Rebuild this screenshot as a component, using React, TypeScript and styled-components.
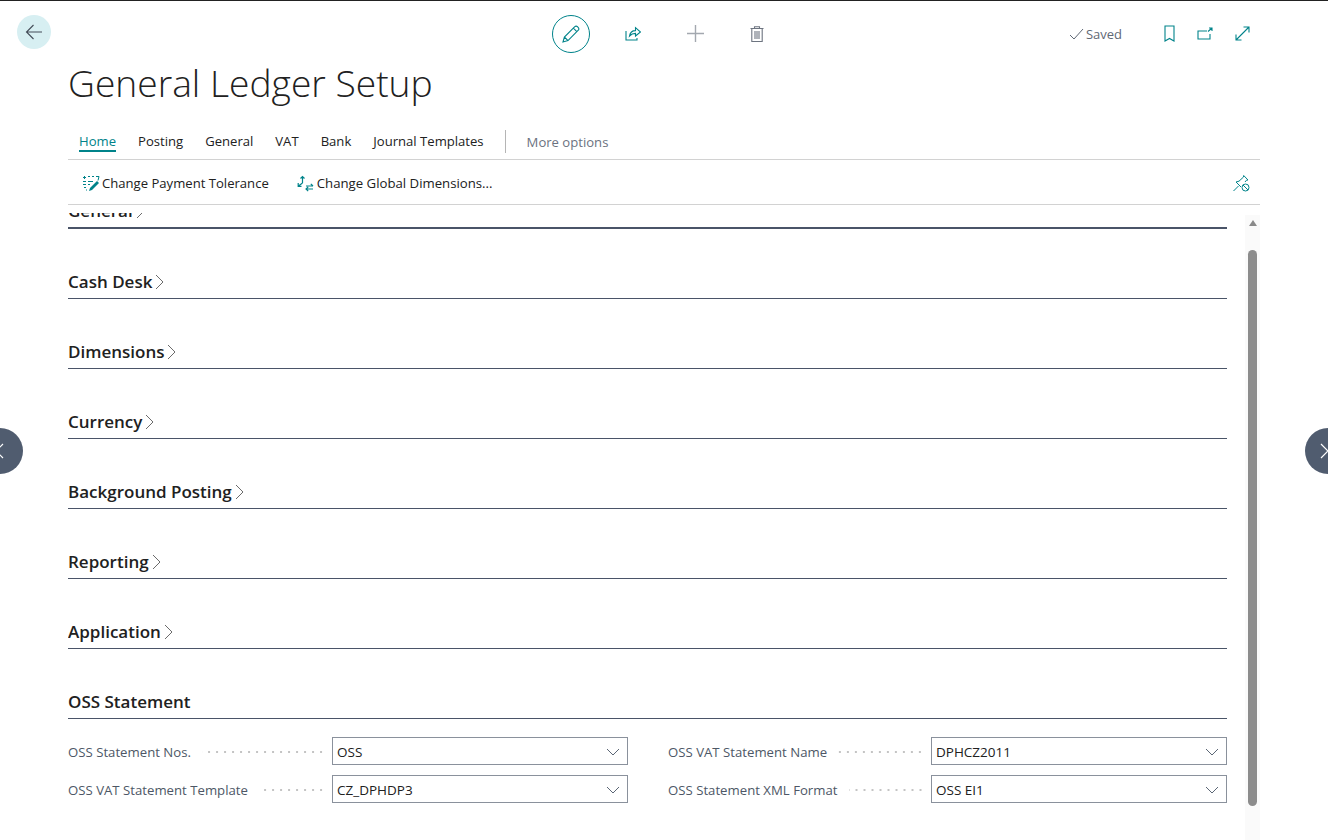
import { createGlobalStyle } from "styled-components";
import styled from "styled-components";

const GlobalStyle = createGlobalStyle`
  html, body {
    margin: 0;
    padding: 0;
    background: #fff;
    font-family: "Open Sans", "Liberation Sans", sans-serif;
    overflow: hidden;
  }
`;

const TEAL = "#00838a";

const collapsed = ["Cash Desk", "Dimensions", "Currency", "Background Posting", "Reporting", "Application"];
const tabs = ["Home", "Posting", "General", "VAT", "Bank", "Journal Templates"];

function Chevron() {
  return (
    <svg width="9" height="16" viewBox="0 0 9 16" fill="none" stroke="#6b6b6b" strokeWidth="1">
      <path d="M1 1l7 7-7 7" />
    </svg>
  );
}

function Caret() {
  return (
    <svg width="14" height="8" viewBox="0 0 14 8" fill="none" stroke="#5b6675" strokeWidth="1">
      <path d="M1 1l6 6 6-6" />
    </svg>
  );
}

function Field({ label, value }: { label: string; value: string }) {
  return (
    <FieldRow>
      <FieldLabel>{label}</FieldLabel>
      <Dots />
      <Select>
        <span>{value}</span>
        <Caret />
      </Select>
    </FieldRow>
  );
}

export default function App() {
  return (
    <Page>
      <GlobalStyle />
      <TopBar>
        <BackButton>
          <svg width="18" height="16" viewBox="0 0 18 16" fill="none" stroke="#444c58" strokeWidth="1.1">
            <path d="M17 8H1.5M8.5 1L1.5 8l7 7" />
          </svg>
        </BackButton>
        <CenterActions>
          <EditButton>
            <svg width="18" height="18" viewBox="0 0 18 18" fill="none" stroke={TEAL} strokeWidth="1.1">
              <path d="M1 17l1.4-5L12.8 1.7a1.8 1.8 0 0 1 2.6 0l.9.9a1.8 1.8 0 0 1 0 2.6L6 15.6 1 17zM2.4 12L6 15.6M11.4 3.2l3.4 3.4" />
            </svg>
          </EditButton>
          <IconSlot>
            <svg width="16" height="15" viewBox="0 0 16 15" fill="none" stroke={TEAL} strokeWidth="1.1">
              <path d="M1 5v9h11v-2M4.500 10c.6-3.500 3-5.400 6-5.400V1.600L15.500 6l-5 4V7.400C8.100 7.400 6.100 8.300 4.500 10z" />
            </svg>
          </IconSlot>
          <IconSlot>
            <svg width="17" height="17" viewBox="0 0 17 17" fill="none" stroke="#a3a8af" strokeWidth="1.4">
              <path d="M8.500 0v17M0 8.500h17" />
            </svg>
          </IconSlot>
          <IconSlot>
            <svg width="14" height="16" viewBox="0 0 14 16" fill="none" stroke="#6d7480" strokeWidth="1.1">
              <path d="M.500 2.500h13M4.500 2.500V.800h5v1.700M1.800 2.500v13h10.400v-13M5 5v8M7 5v8M9 5v8" />
            </svg>
          </IconSlot>
        </CenterActions>
        <RightActions>
          <SavedState>
            <svg width="15" height="12" viewBox="0 0 15 12" fill="none" stroke="#5f6875" strokeWidth="1">
              <path d="M1 7l4 4 9-10" />
            </svg>
            Saved
          </SavedState>
          <RightIcons>
            <svg width="11" height="17" viewBox="0 0 11 17" fill="none" stroke={TEAL} strokeWidth="1.1">
              <path d="M1 1h9v15l-4.500-2.500L1 16z" />
            </svg>
            <svg width="16" height="13" viewBox="0 0 16 13" fill="none" stroke={TEAL} strokeWidth="1.1">
              <path d="M10 4H1v8h12V7M11 4.500L15 1M12 1h3v3" />
            </svg>
            <svg width="15" height="15" viewBox="0 0 15 15" fill="none" stroke={TEAL} strokeWidth="1.1">
              <path d="M1 14L14 1M8.500 1H14v5.500M1 8.500V14h5.500" />
            </svg>
          </RightIcons>
        </RightActions>
      </TopBar>

      <Title>General Ledger Setup</Title>

      <TabBar>
        {tabs.map((t, i) => (
          <Tab key={t} $active={i === 0}>
            {t}
          </Tab>
        ))}
        <TabDivider />
        <MoreTab>More options</MoreTab>
      </TabBar>

      <ToolBar>
        <ToolButton>
          <svg width="18" height="17" viewBox="0 0 18 17" fill="none" stroke={TEAL} strokeWidth="1">
            <path d="M1 2.500h3M2.500 1v3M6 1.500h2M10 1.500h2M14 1.500h3l-1 4M1 6.500h3M6 6.500h5M1 9.500h3M6 9.500h2M2 12.500h2M4 15h1" />
            <path d="M7 16l1-3 7-7 2 2-7 7z" fill={TEAL} stroke="none" />
          </svg>
          Change Payment Tolerance
        </ToolButton>
        <ToolButton>
          <svg width="17" height="17" viewBox="0 0 17 17" fill="none" stroke={TEAL} strokeWidth="1.200">
            <path d="M5.500 8V1.500M3.500 3.500l2-2 2 2M5.500 8L1.500 11M1.200 8v3.300h3.300M9 11h7M13.800 8.800L16 11M9 14h7M11.200 11.800L9 14l2.200 2.200" />
          </svg>
          <WideLabel>Change Global Dimensions...</WideLabel>
        </ToolButton>
        <PinButton>
          <svg width="17" height="17" viewBox="0 0 17 17" fill="none" stroke={TEAL} strokeWidth="1">
            <path d="M.500 16l5-5M3 7l3-.800L10.500 2l.2-1.500L15 5l-1.500.2L12 7M3 7l5 5" />
            <circle cx="12.500" cy="12.500" r="3.500" />
            <path d="M10 10l5 5" />
          </svg>
        </PinButton>
      </ToolBar>

      <ScrollArea>
        <SectionList>
          <Section $first>
            <SectionTitle>
              General
              <Chevron />
            </SectionTitle>
          </Section>
          {collapsed.map((s) => (
            <Section key={s}>
              <SectionTitle>
                {s}
                <Chevron />
              </SectionTitle>
            </Section>
          ))}
          <Section>
            <SectionTitle>OSS Statement</SectionTitle>
          </Section>
          <FieldGrid>
            <Field label="OSS Statement Nos." value="OSS" />
            <Field label="OSS VAT Statement Name" value="DPHCZ2011" />
            <Field label="OSS VAT Statement Template" value="CZ_DPHDP3" />
            <Field label="OSS Statement XML Format" value="OSS EI1" />
          </FieldGrid>
        </SectionList>
        <ScrollTrack>
          <ScrollArrow />
          <ScrollThumb />
        </ScrollTrack>
      </ScrollArea>

      <SideNav $side="left">
        <svg width="9" height="16" viewBox="0 0 9 16" fill="none" stroke="#fff" strokeWidth="1.2">
          <path d="M8 1L1 8l7 7" />
        </svg>
      </SideNav>
      <SideNav $side="right">
        <svg width="9" height="16" viewBox="0 0 9 16" fill="none" stroke="#fff" strokeWidth="1.2">
          <path d="M1 1l7 7-7 7" />
        </svg>
      </SideNav>
    </Page>
  );
}

const Page = styled.div`
  position: relative;
  height: 840px;
  box-sizing: border-box;
  border-top: 1px solid #222;
  overflow: hidden;
  background: #fff;
  color: #212121;
`;

const TopBar = styled.div`
  display: flex;
  align-items: center;
  height: 61px;
  padding: 0 78px 0 17px;
`;

const BackButton = styled.div`
  display: flex;
  align-items: center;
  justify-content: center;
  width: 34px;
  height: 34px;
  border-radius: 50%;
  background: #d7eff2;
`;

const CenterActions = styled.div`
  display: flex;
  align-items: center;
  margin-left: 501px;
  gap: 24px;
  margin-top: 4px;
`;

const EditButton = styled.div`
  display: flex;
  align-items: center;
  justify-content: center;
  box-sizing: border-box;
  width: 38px;
  height: 38px;
  border: 1px solid ${TEAL};
  border-radius: 50%;
`;

const IconSlot = styled.div`
  display: flex;
  align-items: center;
  justify-content: center;
  width: 38px;
  height: 38px;
`;

const RightActions = styled.div`
  display: flex;
  align-items: center;
  margin-left: auto;
  margin-top: 4px;
`;

const SavedState = styled.div`
  display: flex;
  align-items: center;
  gap: 2px;
  font-size: 13px;
  color: #5f6875;
`;

const RightIcons = styled.div`
  display: flex;
  align-items: center;
  gap: 22px;
  margin-left: 42px;
`;

const Title = styled.h1`
  margin: 0 0 0 68px;
  font-size: 37.200px;
  line-height: 42px;
  font-weight: 300;
  color: #212121;
`;

const TabBar = styled.div`
  display: flex;
  align-items: center;
  gap: 22px;
  box-sizing: border-box;
  height: 38px;
  margin: 18px 68px 0;
  padding: 2px 11px 0;
  border-bottom: 1px solid #d2d2d2;
  font-size: 13.100px;
`;

const Tab = styled.div<{ $active?: boolean }>`
  padding: 1px 0 0;
  border-bottom: 2px solid ${(p) => (p.$active ? TEAL : "transparent")};
  color: ${(p) => (p.$active ? TEAL : "#212121")};
`;

const TabDivider = styled.div`
  width: 1px;
  height: 23px;
  margin-left: -1px;
  background: #b5b5b5;
`;

const MoreTab = styled.div`
  margin-left: -1px;
  color: #6b7280;
`;

const ToolBar = styled.div`
  display: flex;
  align-items: center;
  gap: 28px;
  box-sizing: border-box;
  height: 45px;
  margin: 0 68px;
  padding: 2px 10px 0 14px;
  border-bottom: 1px solid #d2d2d2;
`;

const ToolButton = styled.div`
  display: flex;
  align-items: center;
  gap: 2px;
  font-size: 13.100px;
  color: #212121;
`;

const WideLabel = styled.span`
  font-size: 13.200px;
  margin-left: 1px;
`;

const PinButton = styled.div`
  display: flex;
  margin-left: auto;
`;

const ScrollArea = styled.div`
  display: flex;
  gap: 18px;
  height: 632px;
  margin: 8px 68px 0;
  overflow: hidden;
`;

const SectionList = styled.div`
  width: 1159px;
  margin-top: -54px;
`;

const Section = styled.div<{ $first?: boolean }>`
  display: flex;
  align-items: flex-end;
  box-sizing: border-box;
  height: 70px;
  padding-bottom: 5px;
  border-bottom: ${(p) => (p.$first ? "2px" : "1px")} solid #4a5468;
`;

const SectionTitle = styled.div`
  display: flex;
  align-items: center;
  gap: 3px;
  font-size: 17px;
  line-height: 22px;
  font-weight: 600;
  color: #212121;
`;

const FieldGrid = styled.div`
  display: grid;
  grid-template-columns: 560px 559px;
  column-gap: 40px;
  row-gap: 10px;
  margin-top: 18px;
`;

const FieldRow = styled.div`
  display: flex;
  align-items: center;
  height: 28px;
`;

const FieldLabel = styled.div`
  padding-top: 2px;
  font-size: 13.200px;
  color: #4d5766;
  white-space: nowrap;
`;

const Dots = styled.div`
  flex: 1;
  height: 2px;
  margin: 1px 7px 0 11px;
  background-image: radial-gradient(circle, #c4c4c4 0.8px, transparent 1px);
  background-size: 8px 2px;
  background-position: right center;
`;

const Select = styled.div`
  display: flex;
  align-items: center;
  justify-content: space-between;
  box-sizing: border-box;
  flex: none;
  width: 296px;
  height: 28px;
  padding: 2px 7px 0 4px;
  border: 1px solid #8a919c;
  font-size: 13.500px;
  color: #212121;
`;

const ScrollTrack = styled.div`
  position: relative;
  display: flex;
  flex-direction: column;
  align-items: center;
  width: 15px;
  margin-top: 2px;
  background: #fafafa;
`;

const ScrollArrow = styled.div`
  width: 0;
  height: 0;
  margin-top: 5px;
  border-left: 4.500px solid transparent;
  border-right: 4.500px solid transparent;
  border-bottom: 6px solid #8a8a8a;
`;

const ScrollThumb = styled.div`
  width: 9px;
  height: 556px;
  margin-top: 24px;
  border-radius: 5px;
  background: #8c8c8c;
`;

const SideNav = styled.div<{ $side: "left" | "right" }>`
  position: absolute;
  top: 427px;
  ${(p) => p.$side}: -23px;
  display: flex;
  align-items: center;
  justify-content: ${(p) => (p.$side === "left" ? "flex-end" : "flex-start")};
  box-sizing: border-box;
  width: 46px;
  height: 46px;
  padding: 0 ${(p) => (p.$side === "left" ? "19px" : "0")} 0 ${(p) => (p.$side === "left" ? "0" : "15px")};
  border-radius: 50%;
  background: #505c6f;
`;
